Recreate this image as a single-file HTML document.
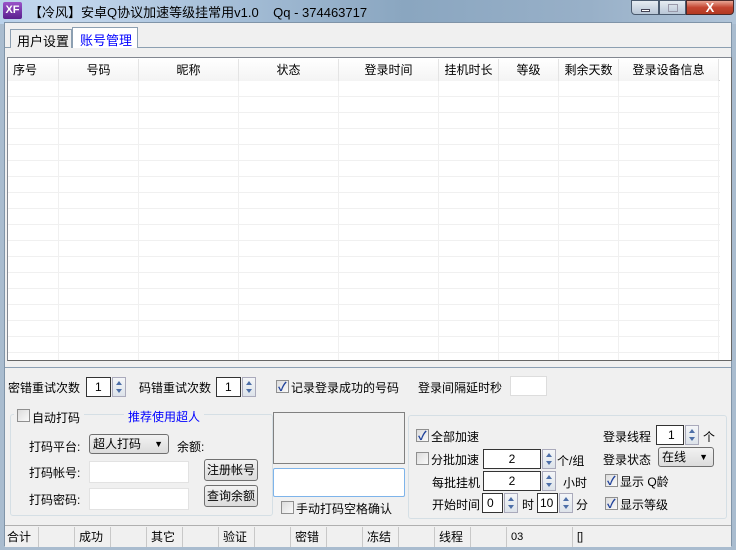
<!DOCTYPE html><html><head><meta charset="utf-8"><style>
*{margin:0;padding:0;box-sizing:border-box}
body{width:736px;height:550px;overflow:hidden;background:#a9bccf;font-family:"Liberation Sans","Noto Sans CJK SC",sans-serif;font-size:12px;color:#000;position:relative}
.a{position:absolute;white-space:nowrap}
.t{font-size:12px}
.title{left:0;top:0;width:736px;height:24px;background:linear-gradient(90deg,#b9d1ea 0%,#c4d8ee 8%,#a6bfd8 30%,#8aa6c0 55%,#98b0c8 80%,#b0c4d8 100%)}
.client{left:4px;top:22px;width:728px;height:524px;background:#f0f0f0;border:1px solid #8094a8}
.inp{background:#fff;border:1px solid #abadb3}
.spin{width:14px;height:20px;border:1px solid #aab;background:linear-gradient(#f4f6f8,#dde3ea)}
.spin:before{content:"";position:absolute;left:3px;top:3px;border:3px solid transparent;border-bottom:4px solid #4d6fa8;border-top:0}
.spin:after{content:"";position:absolute;left:3px;top:11px;border:3px solid transparent;border-top:4px solid #4d6fa8;border-bottom:0}
.cb{width:13px;height:13px;border:1px solid #8f8f8f;background:linear-gradient(135deg,#dcdcdc,#fafafa)}
.ck:after{content:"✓";position:absolute;left:1px;top:-3px;font-size:12px;color:#21439c;font-weight:bold}
.btn{border:1px solid #707070;border-radius:3px;background:linear-gradient(#f2f2f2,#dcdcdc);text-align:center;line-height:20px}
.hdr{top:59px;height:22px;line-height:22px;text-align:center;border-right:1px solid #e4e4e4;background:linear-gradient(#fff,#f4f4f4)}
.sb{top:527px;height:20px;line-height:20px;border-right:1px solid #c8c8c8;padding-left:2px}
</style></head><body>
<div class="a title"></div>
<div class="a" style="left:3px;top:2px;width:19px;height:17px;background:linear-gradient(#9a52c8,#5a1f8e);color:#fff;font-weight:bold;font-size:11px;text-align:center;line-height:17px;border-radius:2px">XF</div>
<div class="a" style="left:29px;top:2px;font-size:13px">【冷风】安卓Q协议加速等级挂常用v1.0&nbsp;&nbsp;&nbsp;&nbsp;Qq - 374463717</div>
<div class="a" style="left:631px;top:0;width:28px;height:15px;border:1px solid #4a5a6e;border-radius:0 0 0 4px;background:linear-gradient(#e6ecf2,#b8c6d6)"><div class="a" style="left:9px;top:8px;width:9px;height:3px;background:#fff;border:1px solid #445"></div></div>
<div class="a" style="left:659px;top:0;width:27px;height:15px;border:1px solid #4a5a6e;background:linear-gradient(#e6ecf2,#b8c6d6)"><div class="a" style="left:8px;top:3px;width:10px;height:8px;border:1px solid #99a"></div></div>
<div class="a" style="left:686px;top:0;width:48px;height:15px;border:1px solid #4a2a2a;border-radius:0 0 4px 0;background:linear-gradient(#e9a594,#c44530 50%,#b23a22);color:#fff;font-weight:bold;text-align:center;line-height:13px;font-size:13px">X</div>
<div class="client a"></div>
<!-- tabs -->
<div class="a" style="left:5px;top:47px;width:726px;height:1px;background:#8c9fb1"></div>
<div class="a" style="left:10px;top:29px;width:62px;height:19px;border:1px solid #8c9fb1;border-bottom:0;background:#f0f0f0;padding:1px 0 0 6px;font-size:13px">用户设置</div>
<div class="a" style="left:72px;top:27px;width:66px;height:21px;border:1px solid #8c9fb1;border-bottom:0;background:#fff;color:#0000ff;padding:2px 0 0 7px;font-size:13px">账号管理</div>
<!-- list -->
<div class="a" style="left:7px;top:57px;width:725px;height:304px;background:#fff;border:1px solid #828790;border-right-color:#666;border-bottom-color:#666;overflow:hidden">
<div class="a" style="left:0;top:23px;width:712px;height:280px;background:repeating-linear-gradient(transparent 0 15px,#f0f0f0 15px 16px)"></div>
<div class="a" style="left:50px;top:23px;width:1px;height:280px;background:#f0f0f0;box-shadow:80px 0 #f0f0f0,180px 0 #f0f0f0,280px 0 #f0f0f0,380px 0 #f0f0f0,440px 0 #f0f0f0,500px 0 #f0f0f0,560px 0 #f0f0f0,660px 0 #f0f0f0"></div>
<div class="a" style="left:0;top:22px;width:712px;height:1px;background:#d5d5d5"></div>
</div>
<div class="a hdr" style="left:8px;width:51px;text-align:left;padding-left:5px">序号</div>
<div class="a hdr" style="left:59px;width:80px">号码</div>
<div class="a hdr" style="left:139px;width:100px">昵称</div>
<div class="a hdr" style="left:239px;width:100px">状态</div>
<div class="a hdr" style="left:339px;width:100px">登录时间</div>
<div class="a hdr" style="left:439px;width:60px">挂机时长</div>
<div class="a hdr" style="left:499px;width:60px">等级</div>
<div class="a hdr" style="left:559px;width:60px">剩余天数</div>
<div class="a hdr" style="left:619px;width:100px">登录设备信息</div>
<div class="a" style="left:5px;top:367px;width:726px;height:1px;background:#8ca0b4"></div>
<!-- row 1 -->
<div class="a" style="left:8px;top:379px">密错重试次数</div>
<div class="a inp" style="left:86px;top:377px;width:25px;height:20px;border-color:#333;padding:2px 0 0 8px">1</div>
<div class="a spin" style="left:112px;top:377px"></div>
<div class="a" style="left:139px;top:379px">码错重试次数</div>
<div class="a inp" style="left:216px;top:377px;width:25px;height:20px;border-color:#333;padding:2px 0 0 8px">1</div>
<div class="a spin" style="left:242px;top:377px"></div>
<div class="a cb ck" style="left:276px;top:380px"></div>
<div class="a" style="left:291px;top:379px">记录登录成功的号码</div>
<div class="a" style="left:418px;top:379px">登录间隔延时秒</div>
<div class="a inp" style="left:510px;top:376px;width:37px;height:20px;border-color:#ddd"></div>
<!-- left group -->
<div class="a" style="left:10px;top:414px;width:263px;height:102px;border:1px solid #d5dfe5;border-radius:3px"></div>
<div class="a" style="left:14px;top:407px;width:70px;height:16px;background:#f0f0f0"></div>
<div class="a cb" style="left:17px;top:409px"></div>
<div class="a" style="left:32px;top:409px">自动打码</div>
<div class="a" style="left:124px;top:408px;padding:0 4px;background:#f0f0f0;color:#0000ff">推荐使用超人</div>
<div class="a" style="left:29px;top:438px">打码平台:</div>
<div class="a btn" style="left:89px;top:434px;width:80px;height:20px;text-align:left;padding-left:3px;line-height:18px">超人打码<span style="position:absolute;right:5px;top:0;font-size:9px">▼</span></div>
<div class="a" style="left:177px;top:438px">余额:</div>
<div class="a" style="left:29px;top:464px">打码帐号:</div>
<div class="a inp" style="left:89px;top:461px;width:100px;height:22px;border-color:#e2e2e2"></div>
<div class="a btn" style="left:204px;top:459px;width:54px;height:22px">注册帐号</div>
<div class="a" style="left:29px;top:491px">打码密码:</div>
<div class="a inp" style="left:89px;top:488px;width:100px;height:22px;border-color:#e2e2e2"></div>
<div class="a btn" style="left:204px;top:485px;width:54px;height:22px">查询余额</div>
<!-- middle -->
<div class="a" style="left:273px;top:412px;width:132px;height:52px;border:1px solid #808080;background:#f0f0f0"></div>
<div class="a inp" style="left:273px;top:468px;width:132px;height:29px;border-color:#7eb4ea;border-radius:2px"></div>
<div class="a cb" style="left:281px;top:501px"></div>
<div class="a" style="left:296px;top:500px">手动打码空格确认</div>
<!-- right group -->
<div class="a" style="left:408px;top:415px;width:319px;height:104px;border:1px solid #d5dfe5;border-radius:3px"></div>
<div class="a cb ck" style="left:416px;top:429px"></div>
<div class="a" style="left:431px;top:428px">全部加速</div>
<div class="a cb" style="left:416px;top:452px"></div>
<div class="a" style="left:431px;top:451px">分批加速</div>
<div class="a inp" style="left:483px;top:449px;width:58px;height:20px;border-color:#333;text-align:center;line-height:18px">2</div>
<div class="a spin" style="left:542px;top:449px"></div>
<div class="a" style="left:557px;top:452px">个/组</div>
<div class="a" style="left:432px;top:474px">每批挂机</div>
<div class="a inp" style="left:483px;top:471px;width:58px;height:20px;border-color:#333;text-align:center;line-height:18px">2</div>
<div class="a spin" style="left:542px;top:471px"></div>
<div class="a" style="left:563px;top:474px">小时</div>
<div class="a" style="left:432px;top:496px">开始时间</div>
<div class="a inp" style="left:482px;top:493px;width:21px;height:20px;border-color:#333;padding:2px 0 0 4px">0</div>
<div class="a spin" style="left:504px;top:493px"></div>
<div class="a" style="left:522px;top:496px">时</div>
<div class="a inp" style="left:537px;top:493px;width:21px;height:20px;border-color:#333;padding:2px 0 0 2px">10</div>
<div class="a spin" style="left:559px;top:493px"></div>
<div class="a" style="left:576px;top:496px">分</div>
<div class="a" style="left:603px;top:428px">登录线程</div>
<div class="a inp" style="left:656px;top:425px;width:28px;height:20px;border-color:#333;padding:2px 0 0 11px">1</div>
<div class="a spin" style="left:685px;top:425px"></div>
<div class="a" style="left:703px;top:428px">个</div>
<div class="a" style="left:603px;top:451px">登录状态</div>
<div class="a btn" style="left:658px;top:447px;width:56px;height:20px;text-align:left;padding-left:3px;line-height:18px">在线<span style="position:absolute;right:5px;top:0;font-size:9px">▼</span></div>
<div class="a cb ck" style="left:605px;top:474px"></div>
<div class="a" style="left:620px;top:473px">显示 Q龄</div>
<div class="a cb ck" style="left:605px;top:497px"></div>
<div class="a" style="left:620px;top:496px">显示等级</div>
<!-- status bar -->
<div class="a" style="left:5px;top:525px;width:726px;height:22px;background:#f0f0f0;border-top:1px solid #b0b0b0"></div>
<div class="a sb" style="left:5px;width:34px">合计</div>
<div class="a sb" style="left:39px;width:36px"></div>
<div class="a sb" style="left:75px;width:36px;padding-left:4px">成功</div>
<div class="a sb" style="left:111px;width:36px"></div>
<div class="a sb" style="left:147px;width:36px;padding-left:4px">其它</div>
<div class="a sb" style="left:183px;width:36px"></div>
<div class="a sb" style="left:219px;width:36px;padding-left:4px">验证</div>
<div class="a sb" style="left:255px;width:36px"></div>
<div class="a sb" style="left:291px;width:36px;padding-left:4px">密错</div>
<div class="a sb" style="left:327px;width:36px"></div>
<div class="a sb" style="left:363px;width:36px;padding-left:4px">冻结</div>
<div class="a sb" style="left:399px;width:36px"></div>
<div class="a sb" style="left:435px;width:36px;padding-left:4px">线程</div>
<div class="a sb" style="left:471px;width:36px"></div>
<div class="a sb" style="left:507px;width:66px;padding-left:4px;font-size:11px">03</div>
<div class="a sb" style="left:573px;width:158px;padding-left:4px;font-size:11px;border:0">[]</div>
</body></html>
